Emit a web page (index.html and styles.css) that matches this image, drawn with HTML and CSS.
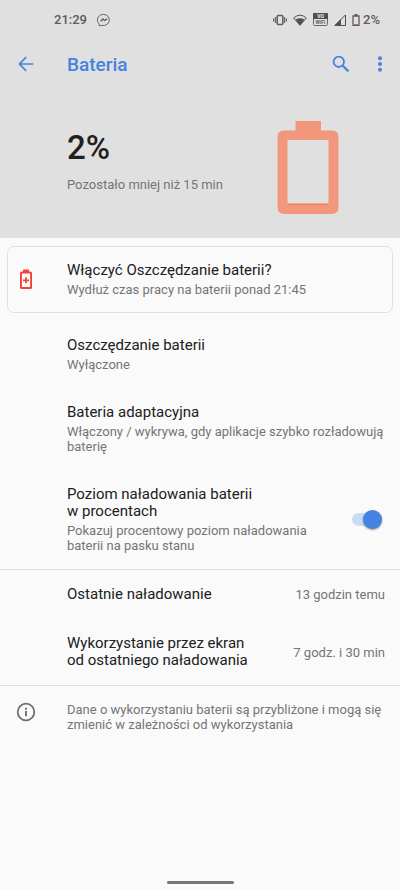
FILE: index.html
```html
<!DOCTYPE html>
<html lang="pl">
<head>
<meta charset="utf-8">
<meta name="viewport" content="width=device-width, initial-scale=1">
<title>Bateria</title>
<link rel="stylesheet" href="styles.css">
</head>
<body>
<header class="header">
  <div class="status">
    <span class="clock">21:29</span>
    <svg class="messenger" width="14" height="14" viewBox="0 0 14 14" fill="none" stroke="#5c5c5c"><path d="M2.2 12.8V11A6 5.6 0 1 1 5 12.4Z" stroke-width=".9"/><path d="m3.7 8.3 2.2-2.3 1.8 1.5 2.5-1.6" stroke-width="1.4"/></svg>
    <div class="status-icons">
      <svg width="14" height="12" viewBox="0 0 14 12" fill="none" stroke="#5c5c5c"><rect x="4.2" y="1.5" width="5.6" height="9" rx="1" stroke-width="1.5"/><path d="M2.4 3v6M.6 4.500v3M11.600 3v6M13.400 4.500v3" stroke-width="1.100"/></svg>
      <svg width="14" height="12" viewBox="0 0 14 12"><path d="M.7 4Q7-1.700 13.300 4L7 11.400Z" fill="none" stroke="#505050"/><path d="M2.600 5.600Q7 3 11.400 5.600L7 11.200Z" fill="#505050"/></svg>
      <svg width="15" height="13" viewBox="0 0 15 13"><rect x=".5" y=".5" width="14" height="12" rx="1" fill="none" stroke="#686868"/><path d="M0 1Q0 0 1 0h13q1 0 1 1v5H0Z" fill="#505050"/><text class="tiny light" x="7.5" y="5" text-anchor="middle">VO</text><text class="tiny" x="7.5" y="11" text-anchor="middle">WiFi</text></svg>
      <svg width="12" height="12" viewBox="0 0 12 12"><path d="M.9 11.500 11.500.9v10.600Z" fill="none" stroke="#505050"/><path d="M.5 11.500 7 5v6.500Z" fill="#505050"/></svg>
      <svg width="8" height="12" viewBox="0 0 8 12"><path d="M1 2h6v9.300H1Z" fill="none" stroke="#5c5c5c" stroke-width="1.300"/><path d="M2.500 0h3v2h-3Z" fill="#5c5c5c"/><path d="M2 10.500h4" stroke="#b87060"/></svg>
      <span class="status-level">2%</span>
    </div>
  </div>
  <div class="toolbar">
    <button class="icon-button back" aria-label="Wstecz"><svg width="16" height="16" viewBox="0 0 16 16" fill="none" stroke="#4483df" stroke-width="1.7"><path d="M15.3 8H1.8M8.2 1.2 1.5 8l6.7 6.8"/></svg></button>
    <h1 class="page-title">Bateria</h1>
    <button class="icon-button search" aria-label="Szukaj"><svg width="18" height="18" viewBox="0 0 18 18" fill="none" stroke="#4483df"><circle cx="6.8" cy="6.8" r="5.2" stroke-width="1.8"/><path d="m10.800 10.800 5.600 5.600" stroke-width="2.200"/></svg></button>
    <button class="icon-button more" aria-label="Więcej opcji"><svg width="4" height="16" viewBox="0 0 4 16" fill="#4483df"><circle cx="2" cy="2.300" r="2"/><circle cx="2" cy="8" r="2"/><circle cx="2" cy="13.700" r="2"/></svg></button>
  </div>
  <div class="summary">
    <div>
      <div class="level">2%</div>
      <div class="sub">Pozostało mniej niż 15 min</div>
    </div>
    <svg class="battery" width="62" height="93" viewBox="0 0 62 93"><path fill-rule="evenodd" fill="#f2977b" d="M18.500 0h25.500v9.500h11q6.500 0 6.500 6.500v70.500q0 6.500-6.500 6.500H7q-6.500 0-6.500-6.500V16q0-6.500 6.500-6.500h11.500ZM10.500 19v64h41V19Z"/><path d="M10.500 82.500h41v1.500h-41Z" fill="#ff7a50"/></svg>
  </div>
</header>
<main>
  <a class="row card" href="#">
    <svg class="lead" width="14" height="22" viewBox="0 0 14 22"><path d="M4 .5h6v2h1.500q1.500 0 1.500 1.500v14.500q0 1.500-1.500 1.500h-9Q1 20 1 18.500V4q0-1.500 1.500-1.500H4ZM2.900 4.400v13.700h8.200V4.400Z" fill="#f04438" fill-rule="evenodd"/><path d="M7 8.300v6M4 11.300h6" stroke="#f04438" stroke-width="1.700"/></svg>
    <span class="text"><span class="title">Włączyć Oszczędzanie baterii?</span><span class="sub">Wydłuż czas pracy na baterii ponad 21:45</span></span>
  </a>
  <a class="row" href="#">
    <span class="text"><span class="title">Oszczędzanie baterii</span><span class="sub">Wyłączone</span></span>
  </a>
  <a class="row" href="#">
    <span class="text"><span class="title">Bateria adaptacyjna</span><span class="sub">Włączony / wykrywa, gdy aplikacje szybko rozładowują baterię</span></span>
  </a>
  <label class="row divided">
    <span class="text"><span class="title">Poziom naładowania baterii<br>w procentach</span><span class="sub">Pokazuj procentowy poziom naładowania baterii na pasku stanu</span></span>
    <input class="switch" type="checkbox" role="switch" checked>
  </label>
  <div class="row">
    <span class="text"><span class="title">Ostatnie naładowanie</span></span>
    <span class="value">13 godzin temu</span>
  </div>
  <div class="row divided">
    <span class="text"><span class="title">Wykorzystanie przez ekran<br>od ostatniego naładowania</span></span>
    <span class="value">7 godz. i 30 min</span>
  </div>
  <div class="row note">
    <svg class="lead" width="20" height="20" viewBox="0 0 20 20"><circle cx="10" cy="10" r="8.300" fill="none" stroke="#6f6f6f" stroke-width="1.800"/><path d="M10 9v5.200M10 5.800v1.900" stroke="#6f6f6f" stroke-width="1.900"/></svg>
    <p class="sub">Dane o wykorzystaniu baterii są przybliżone i mogą się zmienić w zależności od wykorzystania</p>
  </div>
</main>
<footer class="nav"><div class="handle"></div></footer>
</body>
</html>
```
FILE: styles.css
```css
* { box-sizing: border-box; }
body {
  margin: 0;
  min-height: 100vh;
  display: flex;
  flex-direction: column;
  background: #fafafa;
  color: #202020;
  font-family: Roboto, "Noto Sans", sans-serif;
}
svg { display: block; flex: none; }
h1, p { margin: 0; }
.header { background: #e0e0e0; padding-bottom: 24px; }
.status {
  display: flex;
  align-items: center;
  height: 39px;
  padding: 0 20px 0 54px;
  color: #5c5c5c;
  font-size: 13px;
  font-weight: 500;
}
.messenger { margin-left: 10px; }
.status-icons { display: flex; align-items: center; gap: 6px; margin-left: auto; }
.status-level { margin-left: -3px; }
.tiny { font: 700 5px Roboto, sans-serif; fill: #606060; }
.light { fill: #eeeeee; }
.toolbar { display: flex; align-items: center; height: 50px; padding-right: 12px; }
.icon-button {
  display: flex;
  align-items: center;
  justify-content: center;
  width: 32px;
  height: 40px;
  padding: 0;
  border: 0;
  background: none;
}
.back { margin: 0 25px 0 10px; }
.more { width: 16px; margin-left: 15px; }
.page-title { flex: 1; color: #4483df; font-size: 19px; font-weight: 500; }
.summary {
  display: flex;
  align-items: flex-end;
  justify-content: space-between;
  padding: 32px 61px 0 67px;
}
.level { margin-bottom: 9px; font-size: 33px; line-height: 40px; font-weight: 500; }
.summary .sub { margin-bottom: 22px; }
.row {
  display: flex;
  align-items: center;
  padding: 16px 15px 16px 67px;
  color: inherit;
  text-decoration: none;
}
.card {
  margin: 8px 7px;
  padding: 15px 7px 15px 8px;
  border: 1px solid #e0e0e0;
  border-radius: 7px;
}
.divided { border-bottom: 1px solid #dcdcdc; }
.text { display: flex; flex: 1; flex-direction: column; gap: 3px; }
.title { font-size: 15px; line-height: 17px; }
.sub, .value { color: #757575; font-size: 13px; line-height: 15px; }
.lead { width: 20px; margin-right: 31px; }
.note { align-items: flex-start; padding-left: 16px; }
.switch {
  appearance: none;
  display: flex;
  align-items: center;
  justify-content: flex-end;
  width: 30px;
  height: 13px;
  margin: 0 3px 0 30px;
  border-radius: 7px;
  background: #c9dbf5;
}
.switch::before {
  content: "";
  width: 19px;
  height: 19px;
  border-radius: 50%;
  background: #4483df;
  box-shadow: 0 1px 2px #00000066;
}
.nav { display: flex; justify-content: center; margin-top: auto; padding-bottom: 5px; }
.handle { width: 67px; height: 3px; border-radius: 2px; background: #777777; }
```
